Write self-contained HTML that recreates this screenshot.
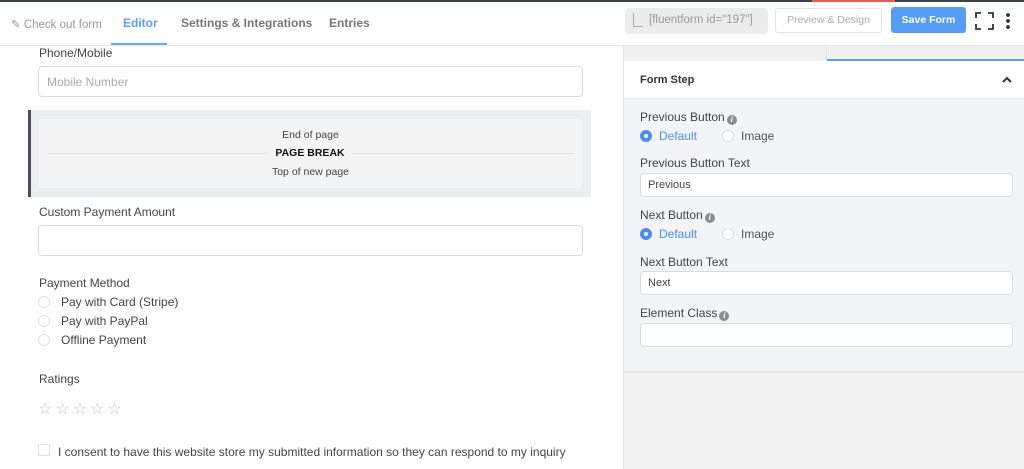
<!DOCTYPE html>
<html><head><style>
*{box-sizing:border-box;margin:0;padding:0}
body{width:1024px;height:469px;overflow:hidden;background:#fff;font-family:"Liberation Sans",sans-serif;position:relative;color:#1e1f21}
.a{position:absolute}
.lbl{font-size:12px;color:#444}
.inp{position:absolute;background:#fff;border:1px solid #dadbdd;border-radius:4px}
.rad{position:absolute;width:12px;height:12px;border:1px solid #dcdfe6;border-radius:50%;background:#fff}
.on{background:#4b8ff5;border-color:#4b8ff5}
.on::after{content:"";position:absolute;left:3px;top:3px;width:4px;height:4px;border-radius:50%;background:#fff}
.info{display:inline-block;width:10px;height:10px;border-radius:50%;background:#8a8d91;color:#fff;font-size:8px;text-align:center;line-height:10px;font-style:italic;font-weight:bold;vertical-align:-1px;margin-left:2px}
.rt{font-size:12px;color:#444}
</style></head><body>
<div class="a" style="left:0;top:0;width:1024px;height:2px;background:#3c3f44"></div>
<div class="a" style="left:812px;top:0;width:83px;height:2px;background:#ef5a4a"></div>
<div class="a" style="left:0;top:45px;width:1024px;height:1px;background:#e4e5e7"></div>
<div class="a" style="left:11px;top:17px;font-size:11.5px;color:#999">✎ Check out form</div>
<div class="a" style="left:123px;top:16px;font-size:12px;color:#5a9ef2;font-weight:bold">Editor</div>
<div class="a" style="left:111px;top:43px;width:56px;height:2px;background:#6aa8f2"></div>
<div class="a" style="left:181px;top:16px;font-size:12px;color:#777;font-weight:bold">Settings &amp; Integrations</div>
<div class="a" style="left:329px;top:16px;font-size:12px;color:#777;font-weight:bold">Entries</div>
<div class="a" style="left:625px;top:8px;width:143px;height:26px;background:#ececec;border-radius:4px;font-size:11.5px;color:#999;padding:6px 0 0 24px">[fluentform id="197"]</div>
<div class="a" style="left:633px;top:13px;width:10px;height:14px;border-left:1.5px solid #aaa;border-bottom:1.5px solid #aaa"></div>
<div class="a" style="left:775px;top:8px;width:107px;height:25px;border:1px solid #e2e3e5;border-radius:3px;font-size:10.5px;color:#aaa;text-align:center;line-height:23px">Preview &amp; Design</div>
<div class="a" style="left:891px;top:7px;width:75px;height:26px;background:#559cf7;border-radius:3px;font-size:10.5px;color:#fff;text-align:center;line-height:26px;font-weight:bold">Save Form</div>
<svg class="a" style="left:975px;top:12px" width="19" height="18"><path d="M1 6V1h5M13 1h5v5M18 12v5h-5M6 17H1v-5" fill="none" stroke="#333" stroke-width="1.8"/></svg>
<div class="a" style="left:1006px;top:12px;width:4px;height:18px;background:radial-gradient(circle,#333 1.8px,transparent 2px) 0 0/4px 6px"></div>
<div class="a" style="left:623px;top:46px;width:401px;height:423px;background:#f2f2f2;border-left:1px solid #e2e3e5"></div>
<div class="a" style="left:624px;top:46px;width:400px;height:14px;background:#f0f0f1"></div>
<div class="a" style="left:826px;top:46px;width:1px;height:14px;background:#e0e0e0"></div>
<div class="a" style="left:827px;top:59px;width:197px;height:2px;background:#5a9ef2"></div>
<div class="a" style="left:624px;top:61px;width:400px;height:38px;background:#fff;border-bottom:1px solid #e8e8e8"></div>
<div class="a" style="left:640px;top:74px;font-size:11px;font-weight:bold;color:#333">Form Step</div>
<svg class="a" style="left:1002px;top:76px" width="10" height="8"><path d="M1 6l4-4 4 4" fill="none" stroke="#333" stroke-width="2"/></svg>
<div class="a" style="left:624px;top:100px;width:400px;height:273px;background:#f3f4f5;border-bottom:2px solid #e3e3e3"></div>
<div class="a rt" style="left:640px;top:110px">Previous Button<span class="info">i</span></div>
<div class="rad on" style="left:640px;top:130px"></div><div class="a" style="left:659px;top:129px;font-size:12px;color:#4b8ff5">Default</div>
<div class="rad" style="left:722px;top:130px"></div><div class="a" style="left:741px;top:129px;font-size:12px;color:#555">Image</div>
<div class="a rt" style="left:640px;top:156px">Previous Button Text</div>
<div class="inp" style="left:640px;top:173px;width:373px;height:24px;font-size:11px;color:#444;padding:5px 7px">Previous</div>
<div class="a rt" style="left:640px;top:208px">Next Button<span class="info">i</span></div>
<div class="rad on" style="left:640px;top:228px"></div><div class="a" style="left:659px;top:227px;font-size:12px;color:#4b8ff5">Default</div>
<div class="rad" style="left:722px;top:228px"></div><div class="a" style="left:741px;top:227px;font-size:12px;color:#555">Image</div>
<div class="a rt" style="left:640px;top:255px">Next Button Text</div>
<div class="inp" style="left:640px;top:271px;width:373px;height:24px;font-size:11px;color:#444;padding:5px 7px">Next</div>
<div class="a rt" style="left:640px;top:306px">Element Class<span class="info">i</span></div>
<div class="inp" style="left:640px;top:323px;width:373px;height:24px"></div>
<div class="a lbl" style="left:39px;top:46px">Phone/Mobile</div>
<div class="inp" style="left:38px;top:66px;width:545px;height:31px;font-size:12px;color:#aaa;padding:8px 8px">Mobile Number</div>
<div class="a" style="left:28px;top:110px;width:563px;height:87px;background:#ecedef;border-left:3px solid #4a4f57"></div>
<div class="a" style="left:39px;top:119px;width:543px;height:69px;background:#f4f4f4"></div>
<div class="a" style="left:48px;top:153px;width:525px;height:1px;background:#e0e0e0"></div>
<div class="a" style="left:39px;top:129px;width:543px;text-align:center;font-size:10.5px;color:#444">End of page</div>
<div class="a" style="left:268px;top:147px;width:84px;background:#f4f4f4;text-align:center;font-size:10.5px;font-weight:bold;color:#111">PAGE BREAK</div>
<div class="a" style="left:39px;top:166px;width:543px;text-align:center;font-size:10.5px;color:#444">Top of new page</div>
<div class="a lbl" style="left:39px;top:205px">Custom Payment Amount</div>
<div class="inp" style="left:38px;top:225px;width:545px;height:31px"></div>
<div class="a lbl" style="left:39px;top:276px">Payment Method</div>
<div class="rad" style="left:38px;top:296px"></div><div class="a lbl" style="left:61px;top:295px">Pay with Card (Stripe)</div>
<div class="rad" style="left:38px;top:315px"></div><div class="a lbl" style="left:61px;top:314px">Pay with PayPal</div>
<div class="rad" style="left:38px;top:334px"></div><div class="a lbl" style="left:61px;top:333px">Offline Payment</div>
<div class="a lbl" style="left:39px;top:372px">Ratings</div>
<div class="a" style="left:38px;top:399px;font-size:16px;color:#bcc3d0;letter-spacing:3px">☆☆☆☆☆</div>
<div class="a" style="left:38px;top:444px;width:12px;height:12px;border:1px solid #dcdfe6;border-radius:2px"></div>
<div class="a lbl" style="left:58px;top:445px">I consent to have this website store my submitted information so they can respond to my inquiry</div>
</body></html>
